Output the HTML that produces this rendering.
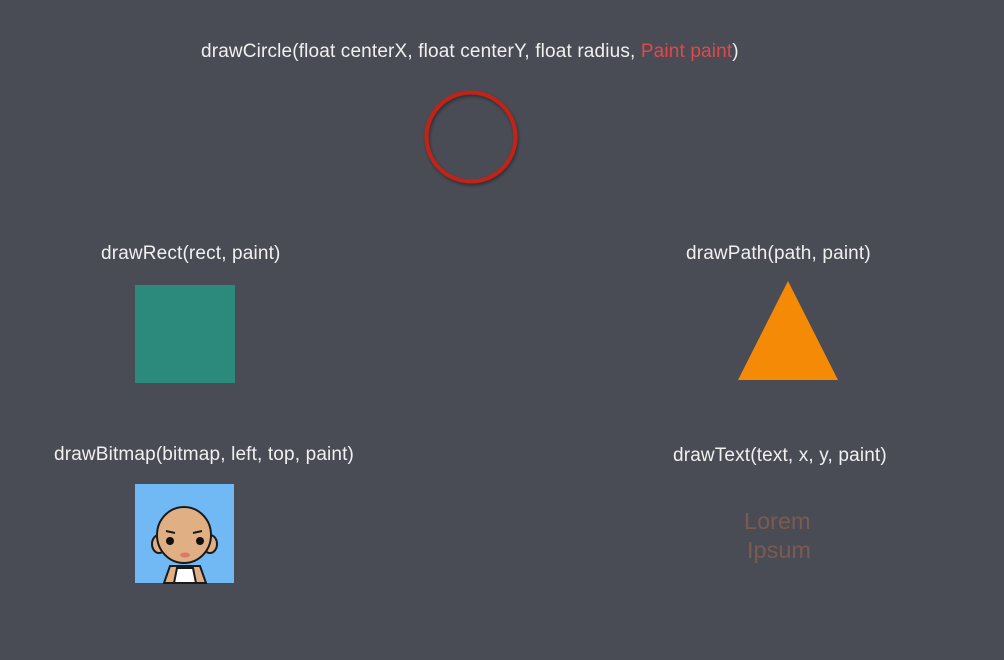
<!DOCTYPE html>
<html><head><meta charset="utf-8"><style>
html,body{margin:0;padding:0}
body{width:1004px;height:660px;background:#4a4c55;position:relative;overflow:hidden;font-family:"Liberation Sans",sans-serif;color:#f0f0f0}
.t{position:absolute;font-size:19px;letter-spacing:0.15px;white-space:nowrap;line-height:22px}
</style></head><body>
<div class="t" style="left:201px;top:41px">drawCircle(float centerX, float centerY, float radius, <span style="color:#e0494a">Paint paint</span>)</div>
<svg style="position:absolute;left:0;top:0" width="1004" height="660">
<defs><filter id="s" x="-20%" y="-20%" width="140%" height="140%"><feDropShadow dx="1" dy="2" stdDeviation="1.5" flood-color="#000" flood-opacity="0.4"/></filter></defs>
<circle cx="471" cy="137" r="44.5" fill="none" stroke="#c32114" stroke-width="4" filter="url(#s)"/>
<rect x="135" y="285" width="100" height="98" fill="#2b8a7c"/>
<polygon points="788,281 838,380 738,380" fill="#f48a05"/>
<rect x="135" y="484" width="99" height="99" fill="#70b9f5"/>
<g stroke="#1a1a1a" stroke-width="2">
<path d="M164,583 L170,566 L200,566 L206,583 Z" fill="#e0b084"/>
<path d="M174,583 L177,568 L193,568 L196,583 Z" fill="#fff"/>
<ellipse cx="159" cy="544" rx="7" ry="9" fill="#e0b084"/>
<ellipse cx="210" cy="544" rx="7" ry="9" fill="#e0b084"/>
<ellipse cx="184" cy="535" rx="27" ry="28" fill="#e0b084"/>
</g>
<path d="M166,531 l9,2 M202,531 l-9,2" stroke="#1a1a1a" stroke-width="2"/>
<circle cx="170" cy="541" r="4" fill="#111"/>
<circle cx="200" cy="541" r="4" fill="#111"/>
<ellipse cx="185" cy="555" rx="5" ry="2.5" fill="#d97a6a"/>
</svg>
<div class="t" style="left:101px;top:243px">drawRect(rect, paint)</div>
<div class="t" style="left:686px;top:243px">drawPath(path, paint)</div>
<div class="t" style="left:54px;top:444px">drawBitmap(bitmap, left, top, paint)</div>
<div class="t" style="left:673px;top:445px">drawText(text, x, y, paint)</div>
<div class="t" style="left:744px;top:507px;color:#7d5a4f;font-size:23.5px;letter-spacing:0;line-height:29px">Lorem<br><span style="margin-left:3px">Ipsum</span></div>
</body></html>
